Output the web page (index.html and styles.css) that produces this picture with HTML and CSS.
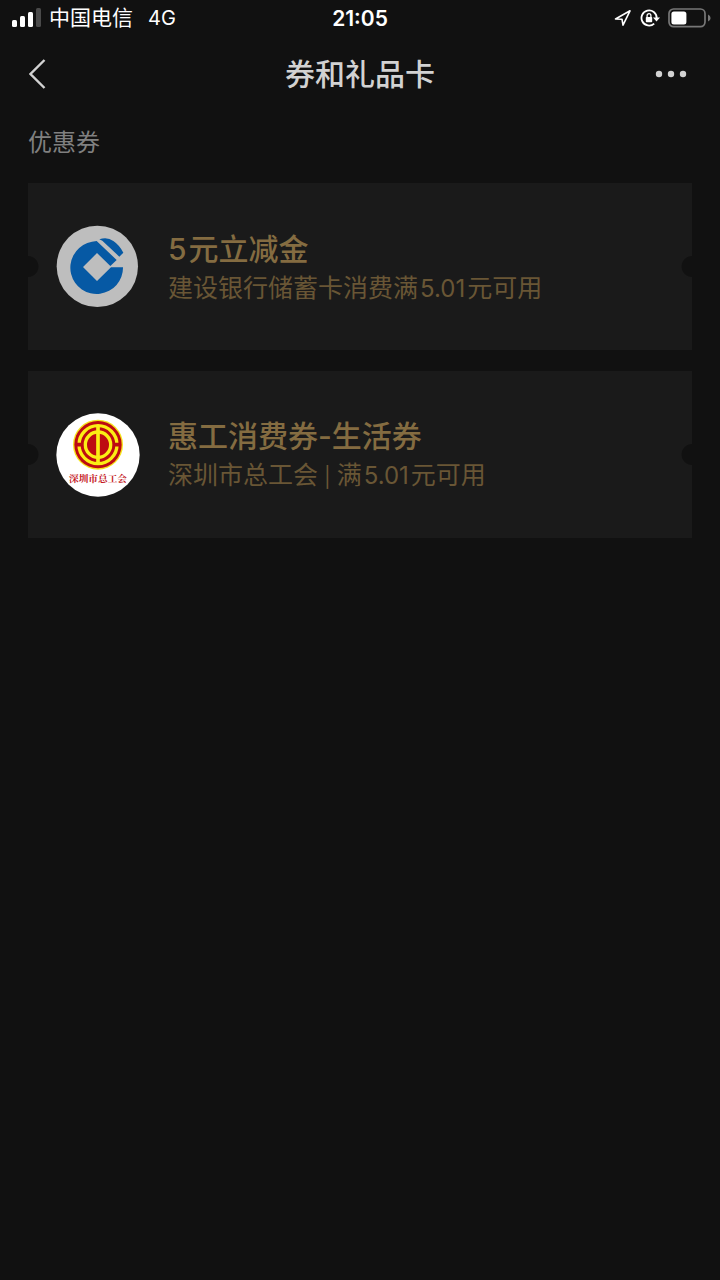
FILE: index.html
```html
<!DOCTYPE html>
<html lang="zh-CN">
<head>
<meta charset="utf-8">
<meta name="viewport" content="width=device-width, initial-scale=1">
<title>券和礼品卡</title>
<link rel="stylesheet" href="styles.css">
</head>
<body>
<div class="status">
  <div class="status-side">
    <svg class="signal" width="30" height="20" viewBox="0 0 30 20" aria-hidden="true">
      <rect x="0" y="12" width="5" height="7" rx="1.5" fill="#fff"/>
      <rect x="8" y="8" width="5" height="11" rx="1.5" fill="#fff"/>
      <rect x="16" y="4" width="5" height="15" rx="1.5" fill="#fff"/>
      <rect x="24" y="0" width="5" height="19" rx="1.5" fill="#4a4a4a"/>
    </svg>
    <span class="carrier">中国电信</span>
    <span class="network">4G</span>
  </div>
  <time class="clock">21:05</time>
  <div class="status-side status-right">
    <svg width="18" height="18" viewBox="0 0 18 18" aria-hidden="true">
      <path d="M1.5 10 L16 1.8 L9 16.2 L8 10.2 Z" fill="none" stroke="#fff" stroke-width="1.6" stroke-linejoin="round"/>
    </svg>
    <svg width="20" height="18" viewBox="0 0 20 18" aria-hidden="true">
      <path d="M14.2 14.6 A7.6 7.6 0 1 1 16.7 9" fill="none" stroke="#fff" stroke-width="1.8"/>
      <path d="M13 8.4 H20 L16.5 12.6 Z" fill="#fff"/>
      <rect x="5.8" y="8" width="6.4" height="5.2" rx="0.8" fill="#fff"/>
      <path d="M7.1 8.5 V6.6 A1.9 1.9 0 0 1 10.9 6.6 V8.5" fill="none" stroke="#fff" stroke-width="1.3"/>
    </svg>
    <svg width="43" height="20" viewBox="0 0 43 20" aria-hidden="true">
      <rect x="1" y="1" width="36" height="17.6" rx="4.5" fill="none" stroke="#777" stroke-width="1.7"/>
      <rect x="3.4" y="3.4" width="15" height="13" rx="2.5" fill="#fff"/>
      <path d="M40 6.4 Q42.6 7.4 42.6 9.9 Q42.6 12.4 40 13.4 Z" fill="#777"/>
    </svg>
  </div>
</div>

<header class="nav">
  <button class="nav-button" type="button" aria-label="返回">
    <svg width="20" height="32" viewBox="0 0 20 32" aria-hidden="true">
      <path d="M15.5 2 L1.5 16 L15.5 30" fill="none" stroke="#d2d2d2" stroke-width="2.4"/>
    </svg>
  </button>
  <h1 class="nav-title">券和礼品卡</h1>
  <button class="nav-button nav-more" type="button" aria-label="更多">
    <svg width="36" height="8" viewBox="0 0 36 8" aria-hidden="true">
      <g fill="#d2d2d2"><circle cx="4" cy="4" r="3.2"/><circle cx="16" cy="4" r="3.2"/><circle cx="28" cy="4" r="3.2"/></g>
    </svg>
  </button>
</header>

<main class="content">
  <h2 class="section-title">优惠券</h2>
  <ul class="coupons">
    <li class="coupon">
      <svg class="logo" viewBox="108 29 252 252" aria-hidden="true">
        <circle cx="232" cy="153" r="122" fill="#bebebe"/>
        <path d="M309 156 A79 79 0 1 1 202 83 Q216 78 230 77 L290 134 L271 152 L231 113 L189 155 L231 197 L273 156 Z" fill="#0659a4"/>
        <path d="M238 72 Q262 64 280 77 Q298 89 310 112 L298 124 L247 76 Z" fill="#0659a4"/>
      </svg>
      <div class="coupon-text">
        <h3 class="coupon-title">5<span class="after-number">元立减金</span></h3>
        <p class="coupon-note">建设银行储蓄卡消费满<span class="amount">5.01</span>元可用</p>
      </div>
    </li>
    <li class="coupon">
      <svg class="logo" viewBox="106 36 252 252" aria-hidden="true">
        <circle cx="232" cy="162" r="125" fill="#fff"/>
        <circle cx="232" cy="131" r="75" fill="#f6e51c"/>
        <circle cx="232" cy="131" r="71" fill="#bd0b12"/>
        <circle cx="232" cy="131" r="57" fill="none" stroke="#fbee14" stroke-width="10"/>
        <path d="M166 131 H188 M276 131 H298" stroke="#bd0b12" stroke-width="11"/>
        <circle cx="232" cy="131" r="38" fill="none" stroke="#fbee14" stroke-width="10"/>
        <path d="M232 76 V186" stroke="#fbee14" stroke-width="11"/>
        <text class="logo-text" x="232" y="244" text-anchor="middle">深圳市总工会</text>
      </svg>
      <div class="coupon-text">
        <h3 class="coupon-title">惠工消费券-生活券</h3>
        <p class="coupon-note">深圳市总工会<span class="divider">|</span>满<span class="amount">5.01</span>元可用</p>
      </div>
    </li>
  </ul>
</main>
</body>
</html>
```
FILE: styles.css
```css
* {
  box-sizing: border-box;
}

body {
  margin: 0;
  min-height: 100vh;
  background: #111;
  color: #d2d2d2;
  font-family: Inter, "Noto Sans CJK SC", sans-serif;
}

h1, h2, h3, p, ul {
  margin: 0;
  padding: 0;
}

.status {
  display: grid;
  grid-template-columns: 1fr auto 1fr;
  align-items: center;
  height: 36px;
  padding: 0 9px;
  color: #fff;
}

.status-side {
  display: flex;
  align-items: center;
}

.status-right {
  justify-content: flex-end;
  gap: 8px;
}

.signal {
  margin-left: 3px;
}

.carrier {
  margin-left: 7px;
  font-size: 21px;
  line-height: 36px;
}

.network {
  margin-left: 15px;
  font-size: 20px;
}

.clock {
  font-size: 21px;
  font-weight: 600;
}

.nav {
  display: grid;
  grid-template-columns: 1fr auto 1fr;
  align-items: center;
  height: 75px;
  padding: 0 29px;
}

.nav-button {
  display: flex;
  justify-self: start;
  padding: 0;
  border: 0;
  background: none;
}

.nav-more {
  justify-self: end;
}

.nav-title {
  font-size: 30px;
  line-height: 40px;
  font-weight: 500;
}

.content {
  padding: 14px 28px;
}

.section-title {
  color: #808080;
  font-size: 24px;
  line-height: 36px;
  font-weight: 400;
}

.coupons {
  display: grid;
  gap: 21px;
  margin-top: 22px;
  list-style: none;
}

.coupon {
  display: flex;
  align-items: center;
  gap: 28px;
  min-height: 167px;
  padding: 28px;
  background:
    radial-gradient(circle at left center, #111 10px, transparent 11px),
    radial-gradient(circle at right center, #111 10px, transparent 11px),
    #1a1a1a;
}

.logo {
  flex: none;
  width: 84px;
  height: 84px;
}

.logo-text {
  fill: #c4161c;
  font-family: "Noto Serif CJK SC", "Noto Sans CJK SC", serif;
  font-size: 29px;
  font-weight: 700;
}

.coupon-text {
  padding-top: 3px;
}

.coupon-title {
  color: #846c41;
  font-size: 30px;
  line-height: 40px;
  font-weight: 500;
}

.after-number {
  margin-left: 2px;
}

.coupon-note {
  color: #695635;
  font-size: 25px;
  line-height: 38px;
}

.amount {
  margin: 0 2px;
  font-size: 24px;
}

.divider {
  margin: 0 6px;
  font-size: 20px;
}
```
